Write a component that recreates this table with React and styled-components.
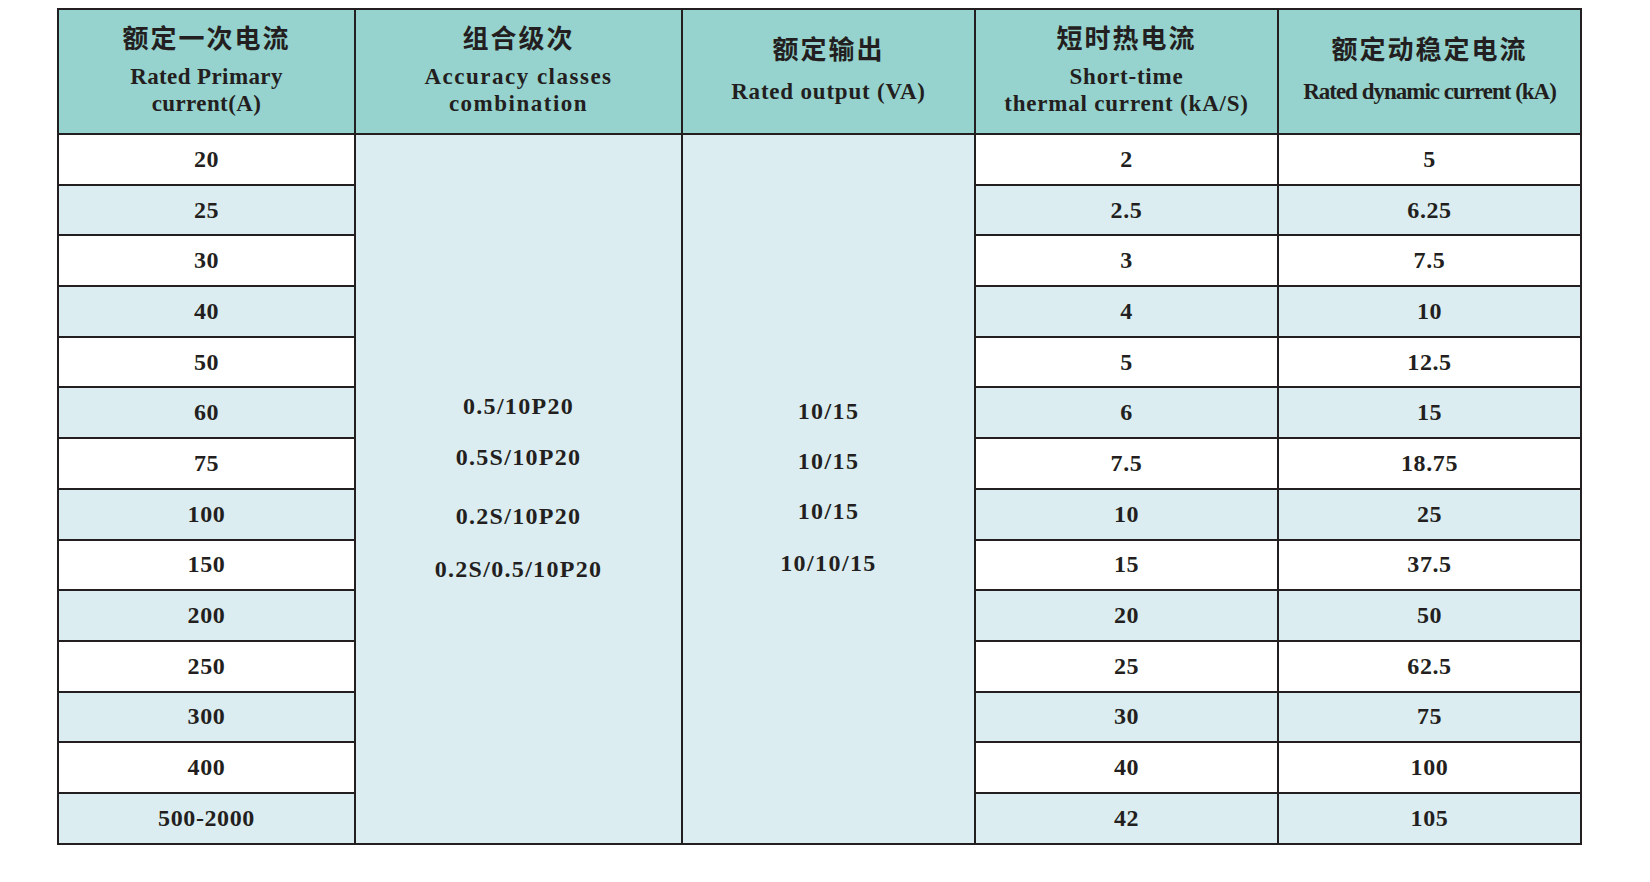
import React from "react";
import styled, { createGlobalStyle } from "styled-components";

const GlobalStyle = createGlobalStyle`
  html, body {
    margin: 0;
    padding: 0;
    background: #ffffff;
  }
`;

const rows = [
  ["20", "2", "5"],
  ["25", "2.5", "6.25"],
  ["30", "3", "7.5"],
  ["40", "4", "10"],
  ["50", "5", "12.5"],
  ["60", "6", "15"],
  ["75", "7.5", "18.75"],
  ["100", "10", "25"],
  ["150", "15", "37.5"],
  ["200", "20", "50"],
  ["250", "25", "62.5"],
  ["300", "30", "75"],
  ["400", "40", "100"],
  ["500-2000", "42", "105"],
];

// offsets follow the uneven spacing of the printed sheet
const accuracy = [
  { text: "0.5/10P20", mt: 0 },
  { text: "0.5S/10P20", mt: 27 },
  { text: "0.2S/10P20", mt: 35 },
  { text: "0.2S/0.5/10P20", mt: 29 },
];

const outputs = [
  { text: "10/15", mt: 0 },
  { text: "10/15", mt: 26 },
  { text: "10/15", mt: 26 },
  { text: "10/10/15", mt: 28 },
];

const headers = [
  { cn: "额定一次电流", en: ["Rated Primary", "current(A)"], ls: 0.4 },
  { cn: "组合级次", en: ["Accuracy classes", "combination"], ls: 1.5 },
  { cn: "额定输出", en: ["Rated output (VA)"], ls: 0.8 },
  { cn: "短时热电流", en: ["Short-time", "thermal current (kA/S)"], ls: 0.8 },
  { cn: "额定动稳定电流", en: ["Rated dynamic current (kA)"], ls: -1 },
];

const colWidths = [297, 327, 293, 303, 303];

const App = () => {
  return (
    <Page>
      <GlobalStyle />
      <SpecTable>
        <colgroup>
          {colWidths.map((w, i) => (
            <col key={i} style={{ width: w }} />
          ))}
        </colgroup>
        <thead>
          <HeadRow>
            {headers.map((h) => (
              <HeadCell key={h.cn}>
                <HeadInner>
                  <CnTitle>{h.cn}</CnTitle>
                  <EnBlock $gap={h.en.length === 1 ? 15 : 11}>
                    {h.en.map((line) => (
                      <EnLine key={line} $ls={h.ls}>
                        {line}
                      </EnLine>
                    ))}
                  </EnBlock>
                </HeadInner>
              </HeadCell>
            ))}
          </HeadRow>
        </thead>
        <tbody>
          {rows.map((r, i) => (
            <BodyRow key={r[0]} $light={i % 2 === 1}>
              <Cell>{r[0]}</Cell>
              {i === 0 && (
                <>
                  <MergedCell rowSpan={rows.length}>
                    <Stack>
                      {accuracy.map((a) => (
                        <StackLine key={a.text} $mt={a.mt} $ls={1.3}>
                          {a.text}
                        </StackLine>
                      ))}
                    </Stack>
                  </MergedCell>
                  <MergedCell rowSpan={rows.length}>
                    <Stack>
                      {outputs.map((o, k) => (
                        <StackLine key={k} $mt={o.mt} $ls={1.4}>
                          {o.text}
                        </StackLine>
                      ))}
                    </Stack>
                  </MergedCell>
                </>
              )}
              <Cell>{r[1]}</Cell>
              <Cell>{r[2]}</Cell>
            </BodyRow>
          ))}
        </tbody>
      </SpecTable>
    </Page>
  );
};

const Page = styled.div`
  padding: 8px 0 0 57px;
  width: 1650px;
  height: 882px;
  box-sizing: border-box;
  background: #ffffff;
`;

const SpecTable = styled.table`
  table-layout: fixed;
  width: 1524px;
  border-collapse: collapse;
  border: 2px solid #231f20;
  color: #231f20;
  font-family: "Liberation Serif", "Times New Roman", serif;
`;

const HeadRow = styled.tr`
  height: 125px;
  background: #96d3cf;
`;

const HeadCell = styled.th`
  border: 2px solid #231f20;
  padding: 0;
  vertical-align: middle;
  font-weight: normal;
`;

const HeadInner = styled.div`
  display: flex;
  flex-direction: column;
  align-items: center;
  justify-content: center;
  padding-bottom: 5px;
`;

const CnTitle = styled.div`
  font-family: "Noto Sans CJK SC", "Noto Sans", sans-serif;
  font-weight: 700;
  font-size: 26px;
  line-height: 30px;
  letter-spacing: 2px;
  color: #231f20;
`;

const EnBlock = styled.div`
  margin-top: ${(p) => p.$gap}px;
  display: flex;
  flex-direction: column;
  align-items: center;
`;

const EnLine = styled.div`
  font-family: "Liberation Serif", "Times New Roman", serif;
  font-weight: 700;
  font-size: 23px;
  line-height: 27px;
  letter-spacing: ${(p) => p.$ls}px;
  white-space: nowrap;
`;

const BodyRow = styled.tr`
  height: 50.7px;
  background: ${(p) => (p.$light ? "#dcedf1" : "#ffffff")};
`;

const Cell = styled.td`
  border: 2px solid #231f20;
  padding: 0;
  text-align: center;
  vertical-align: middle;
  font-size: 24px;
  font-weight: 700;
  letter-spacing: 0.6px;
`;

const MergedCell = styled.td`
  border: 2px solid #231f20;
  padding: 0;
  background: #dcedf1;
  vertical-align: middle;
`;

const Stack = styled.div`
  display: flex;
  flex-direction: column;
  align-items: center;
  padding-bottom: 3px;
`;

const StackLine = styled.div`
  margin-top: ${(p) => p.$mt}px;
  font-size: 24px;
  line-height: 24px;
  font-weight: 700;
  letter-spacing: ${(p) => p.$ls}px;
  white-space: nowrap;
`;

export default App;
